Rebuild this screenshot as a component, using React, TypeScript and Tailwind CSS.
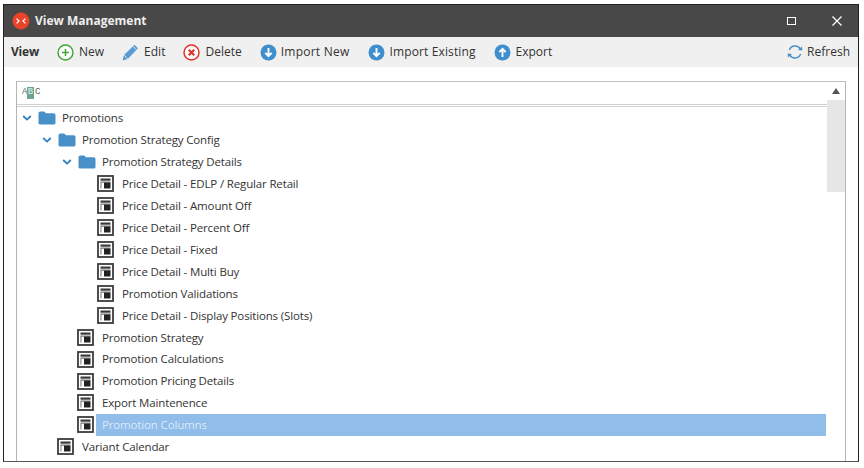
import React from "react";

const Folder = () => (
  <svg width="18" height="14" viewBox="0 0 18 14" className="shrink-0">
    <path d="M0.5 2.2 Q0.5 0.5 2.2 0.5 H6.2 L8 2.3 H15.8 Q17.5 2.3 17.5 4 V12 Q17.5 13.5 15.8 13.5 H2.2 Q0.5 13.5 0.5 12 Z" fill="#4a90c8" />
  </svg>
);

const Chevron = () => (
  <svg width="10" height="6" viewBox="0 0 10 6" className="shrink-0">
    <path d="M1.2 1 L5 4.6 L8.8 1" fill="none" stroke="#2f7fc0" strokeWidth="1.8" />
  </svg>
);

const ViewIcon = () => (
  <svg width="17" height="17" viewBox="0 0 17 17" className="shrink-0">
    <rect x="1" y="1" width="15" height="15" fill="#fff" stroke="#3c3c3c" strokeWidth="1.8" />
    <rect x="3.5" y="3.5" width="10" height="2.2" fill="#3a3a3a" />
    <rect x="3.5" y="6.6" width="10" height="1" fill="#555" />
    <rect x="7" y="7.5" width="6.5" height="6" fill="#222" />
    <rect x="3.5" y="7.5" width="0.9" height="6" fill="#666" />
  </svg>
);

const Tool = ({ icon, label, labelClass }: { icon: React.ReactNode; label: string; labelClass?: string }) => (
  <div className="flex items-center gap-[4px]">
    {icon}
    <span className={labelClass}>{label}</span>
  </div>
);

const NewIcon = () => (
  <svg width="17" height="17" viewBox="0 0 17 17">
    <circle cx="8.5" cy="8.5" r="7.5" fill="#fff" stroke="#3fa535" strokeWidth="1.4" />
    <path d="M8.5 5 V12 M5 8.5 H12" stroke="#3fa535" strokeWidth="1.5" />
  </svg>
);
const EditIcon = () => (
  <svg width="17" height="17" viewBox="0 0 17 17">
    <path d="M0.5 16.5 L2 11 L12.5 0.8 L16 4.2 L5.8 15 Z" fill="#5b9bd0" />
    <path d="M2 11 L5.8 15" stroke="#dbe9f4" strokeWidth="0.9" />
    <path d="M11 2.4 L14.5 5.8" stroke="#dbe9f4" strokeWidth="0.9" />
  </svg>
);
const DeleteIcon = () => (
  <svg width="17" height="17" viewBox="0 0 17 17">
    <circle cx="8.5" cy="8.5" r="7.5" fill="#fff" stroke="#e6302a" strokeWidth="1.5" />
    <path d="M5.8 5.8 L11.2 11.2 M11.2 5.8 L5.8 11.2" stroke="#e6302a" strokeWidth="2.2" />
  </svg>
);
const DownIcon = () => (
  <svg width="17" height="17" viewBox="0 0 17 17">
    <circle cx="8.5" cy="8.5" r="8" fill="#3f8fcf" />
    <path d="M8.5 4 V12 M5.3 8.9 L8.5 12.2 L11.7 8.9" fill="none" stroke="#fff" strokeWidth="1.9" />
  </svg>
);
const UpIcon = () => (
  <svg width="17" height="17" viewBox="0 0 17 17">
    <circle cx="8.5" cy="8.5" r="8" fill="#3f8fcf" />
    <path d="M8.5 13 V5 M5.3 8.1 L8.5 4.8 L11.7 8.1" fill="none" stroke="#fff" strokeWidth="1.9" />
  </svg>
);
const RefreshIcon = () => (
  <svg width="16" height="16" viewBox="0 0 16 16">
    <path d="M2.4 6 A6 6 0 0 1 13.4 5.4" fill="none" stroke="#4a90c8" strokeWidth="1.5" />
    <path d="M13.6 10 A6 6 0 0 1 2.6 10.6" fill="none" stroke="#4a90c8" strokeWidth="1.5" />
    <path d="M11 6 L15.4 6.4 L15 2.4 Z" fill="#4a90c8" />
    <path d="M5 10 L0.6 9.6 L1 13.6 Z" fill="#4a90c8" />
  </svg>
);

const Row = ({ pad, kind, label, selected }: { pad: string; kind: "open" | "view"; label: string; selected?: boolean }) => (
  <div className={`flex h-[21.93px] items-center ${pad}`}>
    {kind === "open" ? (
      <>
        <span className="flex w-[16px] shrink-0 items-center"><Chevron /></span>
        <Folder />
        <span className="ml-[6px]">{label}</span>
      </>
    ) : (
      <>
        <ViewIcon />
        <span
          className={
            selected
              ? "ml-[2px] mr-[1px] flex h-full flex-1 items-center bg-[#90bdea] pl-[6px] text-[#dbe9f8]"
              : "ml-[8px]"
          }
        >
          {label}
        </span>
      </>
    )}
  </div>
);

export default function App() {
  return (
    <div className="h-[468px] w-[864px] overflow-hidden bg-white pl-[3px] pt-[4px] font-['Open_Sans',sans-serif] text-[11.5px] tracking-[-0.15px] text-[#333]">
      <div className="flex h-[458px] w-[856px] flex-col border border-[#222] border-b-[#555] bg-white">
        <div className="flex h-[32px] shrink-0 items-center bg-[#484848] pl-[8px] pr-[16px] text-white">
          <svg width="18" height="18" viewBox="0 0 18 18" className="shrink-0">
            <circle cx="9" cy="9" r="8.5" fill="#e8442a" />
            <path d="M4.6 6.6 L7 9 L4.6 11.4 M13.4 6.6 L11 9 L13.4 11.4" fill="none" stroke="#fff" strokeWidth="1.2" />
          </svg>
          <span className="ml-[5px] text-[12px] font-bold tracking-normal text-[#eeeeee]">View Management</span>
          <div className="ml-auto flex items-center gap-[36px]">
            <span className="block h-[8px] w-[9px] border border-white" />
            <svg width="10" height="10" viewBox="0 0 10 10">
              <path d="M0.5 0.5 L9.5 9.5 M9.5 0.5 L0.5 9.5" stroke="#fff" strokeWidth="1.3" />
            </svg>
          </div>
        </div>
        <div className="flex h-[30px] shrink-0 items-center bg-[#f0f0f0] pl-[7px] pr-[8px] text-[12px] tracking-normal">
          <span className="mr-[18px] font-bold tracking-[-0.2px]">View</span>
          <div className="flex items-center gap-[18px]">
            <Tool icon={<NewIcon />} label="New" labelClass="ml-[1px]" />
            <Tool icon={<EditIcon />} label="Edit" labelClass="ml-[1px]" />
            <Tool icon={<DeleteIcon />} label="Delete" labelClass="ml-[1px]" />
            <Tool icon={<DownIcon />} label="Import New" labelClass="tracking-[0.25px]" />
            <Tool icon={<DownIcon />} label="Import Existing" labelClass="ml-[1px] tracking-[0.12px]" />
            <Tool icon={<UpIcon />} label="Export" labelClass="ml-[1px]" />
          </div>
          <div className="ml-auto">
            <Tool icon={<RefreshIcon />} label="Refresh" />
          </div>
        </div>
        <div className="min-h-0 flex-1 px-[12px] pt-[14px]">
          <div className="flex h-full w-[830px] border-x border-t border-x-[#b4b4b4] border-t-[#c0c0c0]">
            <div className="flex min-w-0 flex-1 flex-col">
              <div className="flex h-[25px] shrink-0 items-center border-b-[3px] border-double border-b-[#d0d0d0] pl-[5px]">
                <span className="flex items-center font-['Liberation_Mono',monospace] text-[9px] tracking-normal text-[#666]">
                  <span className="w-[5px] text-center">A</span>
                  <span className="flex h-[12px] w-[7px] items-center justify-center bg-[#6aa68f] text-[#e8f2ee]">B</span>
                  <span className="ml-[1px] w-[5px] text-center">C</span>
                </span>
              </div>
              <div className="min-w-0">
                <Row pad="pl-[5px]" kind="open" label="Promotions" />
                <Row pad="pl-[25px]" kind="open" label="Promotion Strategy Config" />
                <Row pad="pl-[45px]" kind="open" label="Promotion Strategy Details" />
                <Row pad="pl-[80px]" kind="view" label="Price Detail - EDLP / Regular Retail" />
                <Row pad="pl-[80px]" kind="view" label="Price Detail - Amount Off" />
                <Row pad="pl-[80px]" kind="view" label="Price Detail - Percent Off" />
                <Row pad="pl-[80px]" kind="view" label="Price Detail - Fixed" />
                <Row pad="pl-[80px]" kind="view" label="Price Detail - Multi Buy" />
                <Row pad="pl-[80px]" kind="view" label="Promotion Validations" />
                <Row pad="pl-[80px]" kind="view" label="Price Detail - Display Positions (Slots)" />
                <Row pad="pl-[60px]" kind="view" label="Promotion Strategy" />
                <Row pad="pl-[60px]" kind="view" label="Promotion Calculations" />
                <Row pad="pl-[60px]" kind="view" label="Promotion Pricing Details" />
                <Row pad="pl-[60px]" kind="view" label="Export Maintenence" />
                <Row pad="pl-[60px]" kind="view" label="Promotion Columns" selected />
                <Row pad="pl-[40px]" kind="view" label="Variant Calendar" />
              </div>
            </div>
            <div className="w-[18px] shrink-0">
              <div className="flex h-[18px] items-center justify-center">
                <svg width="8" height="6" viewBox="0 0 8 6">
                  <path d="M4 0 L8 6 H0 Z" fill="#555" />
                </svg>
              </div>
              <div className="h-[92px] bg-[#e6e6e6]" />
            </div>
          </div>
        </div>
      </div>
    </div>
  );
}
